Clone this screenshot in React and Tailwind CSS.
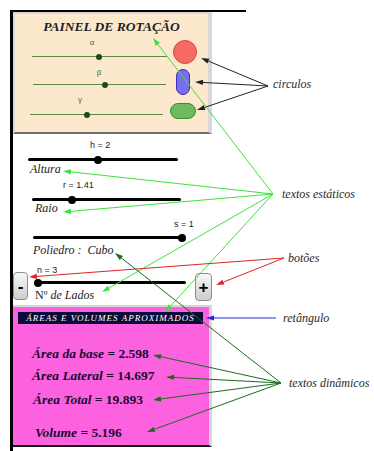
import React from 'react';

function Arrow({ x1, y1, x2, y2, color, w = 1 }) {
  const a = Math.atan2(y2 - y1, x2 - x1);
  const L = 8;
  const W = 2.6;
  const bx = x2 - L * Math.cos(a);
  const by = y2 - L * Math.sin(a);
  const p1 = `${bx + W * Math.sin(a)},${by - W * Math.cos(a)}`;
  const p2 = `${bx - W * Math.sin(a)},${by + W * Math.cos(a)}`;
  return (
    <g>
      <line x1={x1} y1={y1} x2={bx} y2={by} stroke={color} strokeWidth={w} />
      <polygon points={`${x2},${y2} ${p1} ${p2}`} fill={color} />
    </g>
  );
}

const arrows = [
  // circulos
  { x1: 268, y1: 86, x2: 201, y2: 58, color: '#222' },
  { x1: 268, y1: 86, x2: 195, y2: 82, color: '#222' },
  { x1: 268, y1: 86, x2: 197, y2: 110, color: '#222' },
  // textos estáticos
  { x1: 273, y1: 194, x2: 153, y2: 38, color: '#3ee23e' },
  { x1: 273, y1: 194, x2: 63, y2: 171, color: '#3ee23e' },
  { x1: 273, y1: 194, x2: 63, y2: 212, color: '#3ee23e' },
  { x1: 273, y1: 194, x2: 102, y2: 292, color: '#3ee23e' },
  { x1: 273, y1: 194, x2: 165, y2: 312, color: '#3ee23e' },
  // botões
  { x1: 284, y1: 258, x2: 29, y2: 277, color: '#e02424' },
  { x1: 284, y1: 258, x2: 216, y2: 285, color: '#e02424' },
  // retângulo
  { x1: 276, y1: 318, x2: 206, y2: 318, color: '#2626e0' },
  // textos dinâmicos
  { x1: 281, y1: 383, x2: 115, y2: 253, color: '#1d6a1d' },
  { x1: 281, y1: 383, x2: 153, y2: 355, color: '#1d6a1d' },
  { x1: 281, y1: 383, x2: 166, y2: 377, color: '#1d6a1d' },
  { x1: 281, y1: 383, x2: 153, y2: 400, color: '#1d6a1d' },
  { x1: 281, y1: 383, x2: 147, y2: 432, color: '#1d6a1d' },
];

function GreenBtn({ children, className }) {
  return (
    <div className={`h-[28px] rounded-[4px] border border-[#8c8c8c] bg-linear-to-b from-[#f8f8f8] to-[#cdcdcd] flex items-center justify-center font-['Liberation_Sans',sans-serif] text-[17px] font-bold leading-none text-black ${className}`}>
      {children}
    </div>
  );
}

export default function App() {
  return (
    <div className="relative w-[374px] h-[451px] bg-white overflow-hidden font-['Liberation_Serif',serif] text-[#222]">
      <div className="ml-[10px] mt-[10px] w-[236px] h-[441px] border-l-[3px] border-t-2 border-black">
        {/* painel de rotação */}
        <div className="w-[199px] h-[122px] border-t-2 border-l-2 border-r-4 border-b-2 border-[#d8d8d8] border-b-[#6f6f6f] bg-[#fce8cd]">
          <div className="h-[24px] pt-[5px] text-center text-[13.5px] leading-[16px] font-bold italic text-[#1e1e1e]">
            PAINEL DE ROTAÇÃO
          </div>
          <div className="flex items-start h-[29px]">
            <div className="relative ml-[17px] mt-[18px] w-[135px] h-px bg-[#5a8a3c]">
              <div className="absolute left-[55px] -top-[18px] w-[10px] text-center font-['Liberation_Sans',sans-serif] text-[8px] leading-[10px] text-[#3c6e2c]">α</div>
              <div className="absolute left-[64px] -top-[2.5px] size-[6px] rounded-full bg-[#1b4a1b]" />
            </div>
            <div className="ml-[6px] mt-[2px] w-[24px] h-[24px] rounded-full bg-[#f76a63] border border-[#cf4942]" />
          </div>
          <div className="flex items-start h-[29px]">
            <div className="relative ml-[18px] mt-[17px] w-[133px] h-px bg-[#5a8a3c]">
              <div className="absolute left-[61px] -top-[16px] w-[10px] text-center font-['Liberation_Sans',sans-serif] text-[8px] leading-[10px] text-[#3c6e2c]">β</div>
              <div className="absolute left-[69px] -top-[2.5px] size-[6px] rounded-full bg-[#1b4a1b]" />
            </div>
            <div className="ml-[10px] mt-[2px] w-[14px] h-[26px] rounded-full bg-[#7b6cf0] border border-[#3b30b0]" />
          </div>
          <div className="flex items-start h-[29px]">
            <div className="relative ml-[15px] mt-[18px] w-[133px] h-px bg-[#5a8a3c]">
              <div className="absolute left-[45px] -top-[19px] w-[10px] text-center font-['Liberation_Sans',sans-serif] text-[8px] leading-[10px] text-[#3c6e2c]">γ</div>
              <div className="absolute left-[54px] -top-[2.5px] size-[6px] rounded-full bg-[#1b4a1b]" />
            </div>
            <div className="ml-[7px] mt-[7px] w-[26px] h-[16px] rounded-full bg-[#6cbb5c] border border-[#3f8a35]" />
          </div>
        </div>

        {/* controles */}
        <div className="relative ml-[15px] mt-[24px] w-[150px] h-[3px] rounded-full bg-black">
          <div className="absolute left-[62px] -top-[18px] whitespace-nowrap font-['Liberation_Sans',sans-serif] text-[9px] leading-[10px]">h = 2</div>
          <div className="absolute left-[66px] -top-[2.5px] size-[8px] rounded-full bg-black" />
        </div>
        <div className="ml-[17px] mt-[1px] text-[12px] leading-[14px] italic">Altura</div>

        <div className="relative ml-[19px] mt-[22px] w-[149px] h-[3px] rounded-full bg-black">
          <div className="absolute left-[31px] -top-[18px] whitespace-nowrap font-['Liberation_Sans',sans-serif] text-[9px] leading-[10px]">r = 1.41</div>
          <div className="absolute left-[36px] -top-[2.5px] size-[8px] rounded-full bg-black" />
        </div>
        <div className="ml-[22px] text-[12px] leading-[14px] italic">Raio</div>

        <div className="relative ml-[20px] mt-[21px] w-[149px] h-[3px] rounded-full bg-black">
          <div className="absolute left-[141px] -top-[17px] whitespace-nowrap font-['Liberation_Sans',sans-serif] text-[9px] leading-[10px]">s = 1</div>
          <div className="absolute left-[145px] -top-[2.5px] size-[8px] rounded-full bg-black" />
        </div>
        <div className="ml-[20px] mt-[4px] text-[12px] leading-[14px] italic whitespace-pre">Poliedro :  Cubo</div>

        <div className="flex items-start mt-[15px] h-[30px]">
          <GreenBtn className="w-[15px]">-</GreenBtn>
          <div className="ml-[7px] w-[151px]">
            <div className="relative mt-[9px] h-[3px] rounded-full bg-black">
              <div className="absolute left-[2px] -top-[16px] whitespace-nowrap font-['Liberation_Sans',sans-serif] text-[9px] leading-[10px]">n = 3</div>
              <div className="absolute -left-[1px] -top-[2.5px] size-[8px] rounded-full bg-black" />
            </div>
            <div className="mt-[4px] text-[12px] leading-[14px]">
              Nº <span className="italic">de Lados</span>
            </div>
          </div>
          <GreenBtn className="ml-[9px] mt-[1px] w-[17px]">+</GreenBtn>
        </div>

        {/* áreas e volumes */}
        <div className="mt-[3px] w-[199px] h-[142px] border-t-2 border-r-[3px] border-b-2 border-[#d6d6d6] border-b-[#151515] bg-[#fc62df] text-[#200a33]">
          <div className="ml-[5px] mt-[5px] w-[185px] h-[12px] bg-[#0b0b3a] flex items-center justify-center text-white italic text-[9px] tracking-[1px] leading-none">
            ÁREAS E VOLUMES APROXIMADOS
          </div>
          <div className="ml-[19px] mt-[22px] text-[13.5px] leading-[16px] font-bold">
            <span className="italic">Área da base</span> = 2.598
          </div>
          <div className="ml-[19px] mt-[6px] text-[13.5px] leading-[16px] font-bold">
            <span className="italic">Área Lateral</span> = 14.697
          </div>
          <div className="ml-[20px] mt-[8px] text-[13.5px] leading-[16px] font-bold">
            <span className="italic">Área Total</span> = 19.893
          </div>
          <div className="ml-[22px] mt-[17px] text-[13.5px] leading-[16px] font-bold">
            <span className="italic">Volume</span> = 5.196
          </div>
        </div>
      </div>

      <svg className="absolute inset-0 pointer-events-none" width="374" height="451" viewBox="0 0 374 451">
        {arrows.map((a, i) => (
          <Arrow key={i} {...a} />
        ))}
      </svg>

      <span className="absolute left-[273px] top-[77px] text-[12px] leading-[14px] italic text-[#2a2a2a]">circulos</span>
      <span className="absolute left-[282px] top-[187px] text-[12px] leading-[14px] italic text-[#2a2a2a] whitespace-nowrap">textos estáticos</span>
      <span className="absolute left-[288px] top-[251px] text-[12px] leading-[14px] italic text-[#2a2a2a]">botões</span>
      <span className="absolute left-[283px] top-[311px] text-[12px] leading-[14px] italic text-[#2a2a2a]">retângulo</span>
      <span className="absolute left-[289px] top-[376px] text-[12px] leading-[14px] italic text-[#2a2a2a] whitespace-nowrap">textos dinâmicos</span>
    </div>
  );
}
